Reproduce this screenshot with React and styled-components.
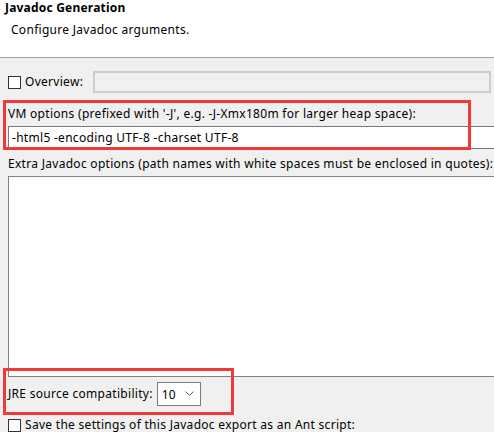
import React from "react";
import styled, { createGlobalStyle } from "styled-components";

const Global = createGlobalStyle`
  html, body { margin: 0; padding: 0; background: #f0f0f0; }
  body { font-family: "Noto Sans", "Open Sans", sans-serif; font-size: 12px; letter-spacing: 0.29px; color: #000; }
`;

const Page = styled.div`
  position: relative;
  width: 494px;
  height: 432px;
  overflow: hidden;
  background: #f0f0f0;
  display: flex;
  flex-direction: column;
`;

const Header = styled.div`
  height: 57px;
  background: #fff;
  border-bottom: 1px solid #a0a0a0;
  display: flex;
  flex-direction: column;
  flex-shrink: 0;
`;

const Title = styled.div`
  font-weight: bold;
  font-size: 12px;
  letter-spacing: 0.2px;
  line-height: 16px;
  padding-left: 5px;
`;

const Desc = styled.div`
  margin-top: 6px;
  padding-left: 11px;
  line-height: 16px;
`;

const Body = styled.div`
  display: flex;
  flex-direction: column;
  padding-left: 8px;
`;

const Row = styled.div`
  display: flex;
  align-items: center;
  height: ${(p) => p.h}px;
  margin-top: ${(p) => p.mt || 0}px;
`;

const Check = styled.span`
  width: 11px;
  height: 11px;
  border: 1px solid #333;
  background: #fff;
  flex-shrink: 0;
  margin-right: 4px;
`;

const Label = styled.span`
  line-height: 16px;
  white-space: nowrap;
`;

const DisabledField = styled.div`
  margin-left: 10px;
  flex: 1;
  height: 18px;
  border: 2px solid #cccccc;
  background: #f0f0f0;
  margin-right: 3px;
`;

const TextField = styled.div`
  height: 21px;
  margin-top: ${(p) => p.mt}px;
  border: 1px solid #7a7a7a;
  border-right: none;
  background: #fff;
  display: flex;
  align-items: center;
  padding-left: 3px;
  white-space: nowrap;
`;

const TextArea = styled.div`
  height: 199px;
  margin-top: ${(p) => p.mt}px;
  border: 1px solid #828282;
  border-right: none;
  background: #fff;
`;

const Combo = styled.div`
  width: 44px;
  height: 24px;
  margin-left: 4px;
  border: 1px solid #7a7a7a;
  background: #fff;
  display: flex;
  align-items: center;
  justify-content: space-between;
  padding: 0 6px 0 4px;
  box-sizing: border-box;
`;

const Mark = styled.div`
  position: absolute;
  left: ${(p) => p.x}px;
  top: ${(p) => p.y}px;
  width: ${(p) => p.w}px;
  height: ${(p) => p.h}px;
  border: 3px solid #f03a3a;
  box-sizing: border-box;
  pointer-events: none;
`;

export default function App() {
  return (
    <>
      <Global />
      <Page>
        <Header>
          <Title>Javadoc Generation</Title>
          <Desc>Configure Javadoc arguments.</Desc>
        </Header>
        <Body>
          <Row h={22} mt={13}>
            <Check />
            <Label>Overview:</Label>
            <DisabledField />
          </Row>
          <Row h={18} mt={12}>
            <Label>VM options (prefixed with '-J', e.g. -J-Xmx180m for larger heap space):</Label>
          </Row>
          <TextField mt={3}>-html5 -encoding UTF-8 -charset UTF-8</TextField>
          <Row h={18} mt={6}>
            <Label>Extra Javadoc options (path names with white spaces must be enclosed in quotes):</Label>
          </Row>
          <TextArea mt={3} />
          <Row h={24} mt={5}>
            <Label>JRE source compatibility:</Label>
            <Combo>
              <span>10</span>
              <svg width="9" height="6" viewBox="0 0 9 6">
                <path d="M0.5 0.5 L4.5 4.5 L8.5 0.5" fill="none" stroke="#555" strokeWidth="1" />
              </svg>
            </Combo>
          </Row>
          <Row h={14} mt={12}>
            <Check />
            <Label>Save the settings of this Javadoc export as an Ant script:</Label>
          </Row>
        </Body>
        <Mark x={3} y={100} w={468} h={50} />
        <Mark x={3} y={368} w={231} h={47} />
      </Page>
    </>
  );
}
